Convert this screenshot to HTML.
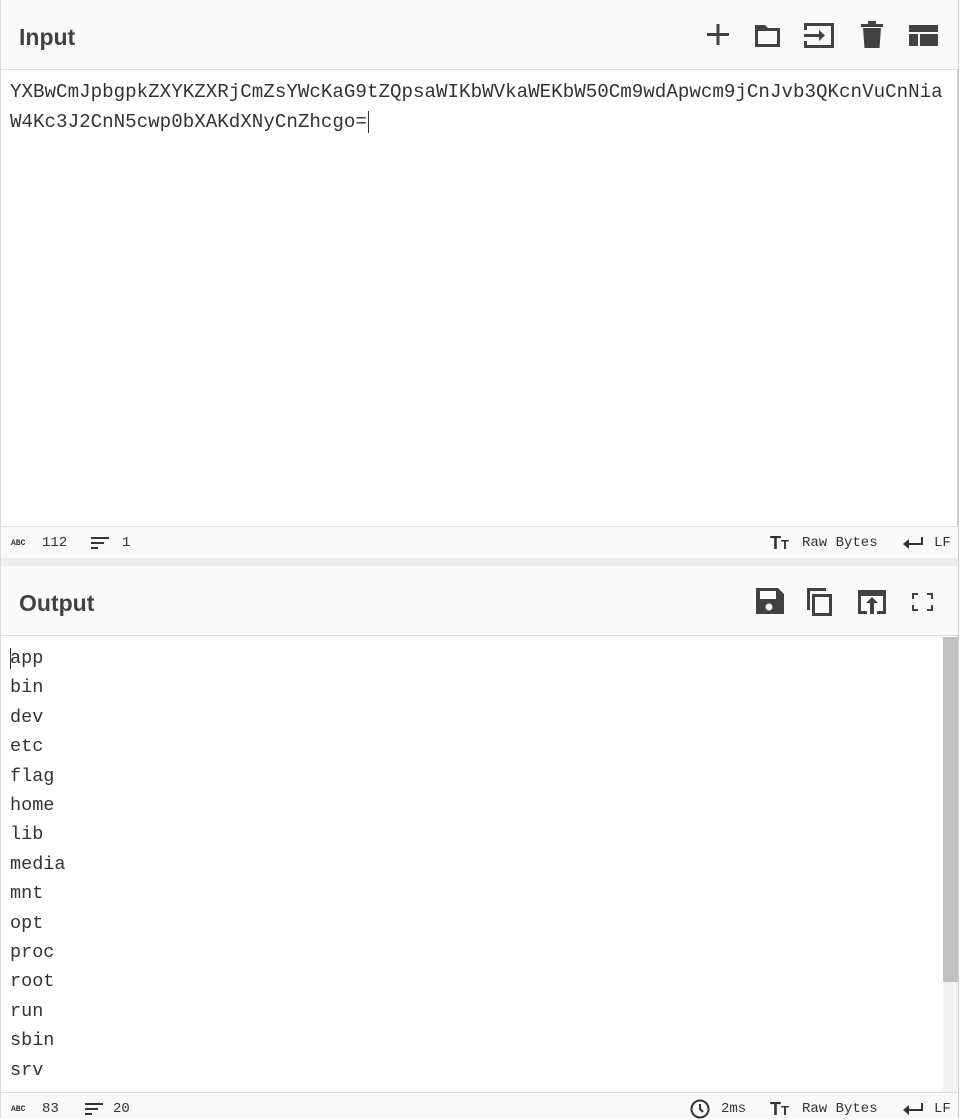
<!DOCTYPE html>
<html><head><meta charset="utf-8"><style>
*{margin:0;padding:0;box-sizing:border-box}
body{width:963px;height:1118px;overflow:hidden;background:#fff;font-family:"Liberation Sans",sans-serif;color:#424242;position:relative}
.wrap{position:absolute;left:0;top:0;width:959px;height:1118px;border-right:2px solid #ccc;border-left:1px solid #ddd}
.hdr{position:absolute;left:0;width:957px;height:70px;background:#fafafa;border-bottom:1px solid #ddd}
.hdr h2{position:absolute;left:18px;top:24px;font-size:23px;font-weight:bold;color:#424242}
.ic{position:absolute;top:0}
.mono{font-family:"Liberation Mono",monospace}
.txt{position:absolute;left:9px;font-size:19.2px;line-height:30px;color:#333;word-break:break-all;width:940px}
.sb{position:absolute;left:0;width:957px;height:32px;background:#f9f9f9;border-top:1px solid #ddd;font-size:14px;color:#333}
.sb span{position:absolute;top:8px}
.abc{font-size:8px;font-weight:bold;letter-spacing:0;top:12px!important}
</style></head><body><div class="wrap">
<div class="hdr" style="top:0"><h2>Input</h2>
<svg class="ic" width="957" height="70" viewBox="0 0 957 70">
<g fill="#424242">
<rect x="706" y="33" width="22" height="3"/><rect x="715.5" y="24" width="3" height="21"/>
<path d="M754 25h10l3 3h12v19h-25z M757 31v13h19v-13z" fill-rule="evenodd"/>
<path d="M803 23h30v25h-30v-7h3v4h24v-19h-24v4h-3z"/><path d="M803 34h15v-4l6 5.5-6 5.5v-4h-15z"/>
<rect x="860" y="24" width="22" height="3"/><rect x="867" y="21" width="8" height="3"/><path d="M862 28h18l-1.5 20h-15z"/>
<rect x="908" y="25" width="29" height="7"/><rect x="908" y="34" width="9" height="12"/><rect x="919" y="34" width="18" height="12"/>
</g></svg></div>
<div class="txt mono" style="top:77px">YXBwCmJpbgpkZXYKZXRjCmZsYWcKaG9tZQpsaWIKbWVkaWEKbW50Cm9wdApwcm9jCnJvb3QKcnVuCnNiaW4Kc3J2CnN5cwp0bXAKdXNyCnZhcgo=<span style="border-left:1px solid #333;margin-left:1px"></span></div>
<div class="sb mono" style="top:526px"><span class="abc" style="left:10px">ABC</span><span style="left:41px">112</span>
<svg style="position:absolute;left:90px;top:10px" width="20" height="14"><g fill="#333"><rect x="0" y="0" width="18" height="2"/><rect x="0" y="5" width="13" height="2"/><rect x="0" y="10" width="7" height="2"/></g></svg>
<span style="left:121px">1</span>
<span style="left:769px;top:6px;font-family:'Liberation Sans';font-weight:bold;font-size:18px">T<small style="font-size:13px">T</small></span>
<span style="left:801px">Raw Bytes</span>
<svg style="position:absolute;left:901px;top:9px" width="22" height="14"><path d="M20 1v7H4" stroke="#333" stroke-width="2" fill="none"/><path d="M1 8l6-5v10z" fill="#333"/></svg>
<span style="left:933px">LF</span></div>
<div style="position:absolute;top:558px;left:0;width:957px;height:8px;background:#eee"></div>
<div class="hdr" style="top:566px"><h2>Output</h2>
<svg class="ic" width="957" height="70" viewBox="0 0 957 70">
<g fill="#424242">
<path d="M755 22h22l6 6v20h-28z M759 25v8h16v-8z" fill-rule="evenodd"/><circle cx="768" cy="41" r="3.5" fill="#fafafa"/>
<path d="M806 22h19v3h-16v19h-3z"/><path d="M811 28h20v22h-20z M814 31v16h14v-16z" fill-rule="evenodd"/>
<path d="M857 24h28v24h-9v-3h6v-15h-22v15h6v3h-9z"/><path d="M871 31l6 6h-4v11h-4v-11h-4z"/>
<path d="M911 27h6v2h-4v4h-2z M926 27h6v6h-2v-4h-4z M911 39h2v4h4v2h-6z M930 39h2v6h-6v-2h4z"/>
</g></svg></div>
<div style="position:absolute;left:942px;top:637px;width:15px;height:456px;background:#f3f3f3"><div style="height:345px;background:#c1c1c1"></div></div>
<div class="txt mono" style="top:644px;line-height:29.4px;font-size:18.5px"><span style="border-left:1px solid #333;margin-right:-1px"></span>app<br>bin<br>dev<br>etc<br>flag<br>home<br>lib<br>media<br>mnt<br>opt<br>proc<br>root<br>run<br>sbin<br>srv</div>
<div class="sb mono" style="top:1092px;height:26px;background:#f9f9f9"><span class="abc" style="left:10px">ABC</span><span style="left:41px">83</span>
<svg style="position:absolute;left:84px;top:10px" width="20" height="14"><g fill="#333"><rect x="0" y="0" width="18" height="2"/><rect x="0" y="5" width="13" height="2"/><rect x="0" y="10" width="7" height="2"/></g></svg>
<span style="left:112px">20</span>
<svg style="position:absolute;left:689px;top:6px" width="20" height="20"><circle cx="10" cy="10" r="8.5" stroke="#333" stroke-width="2" fill="none"/><path d="M10 5v5l3 3" stroke="#333" stroke-width="2" fill="none"/></svg>
<span style="left:720px">2ms</span>
<span style="left:769px;top:6px;font-family:'Liberation Sans';font-weight:bold;font-size:18px">T<small style="font-size:13px">T</small></span>
<span style="left:801px">Raw Bytes</span>
<svg style="position:absolute;left:901px;top:9px" width="22" height="14"><path d="M20 1v7H4" stroke="#333" stroke-width="2" fill="none"/><path d="M1 8l6-5v10z" fill="#333"/></svg>
<span style="left:933px">LF</span></div>
</div></body></html>
